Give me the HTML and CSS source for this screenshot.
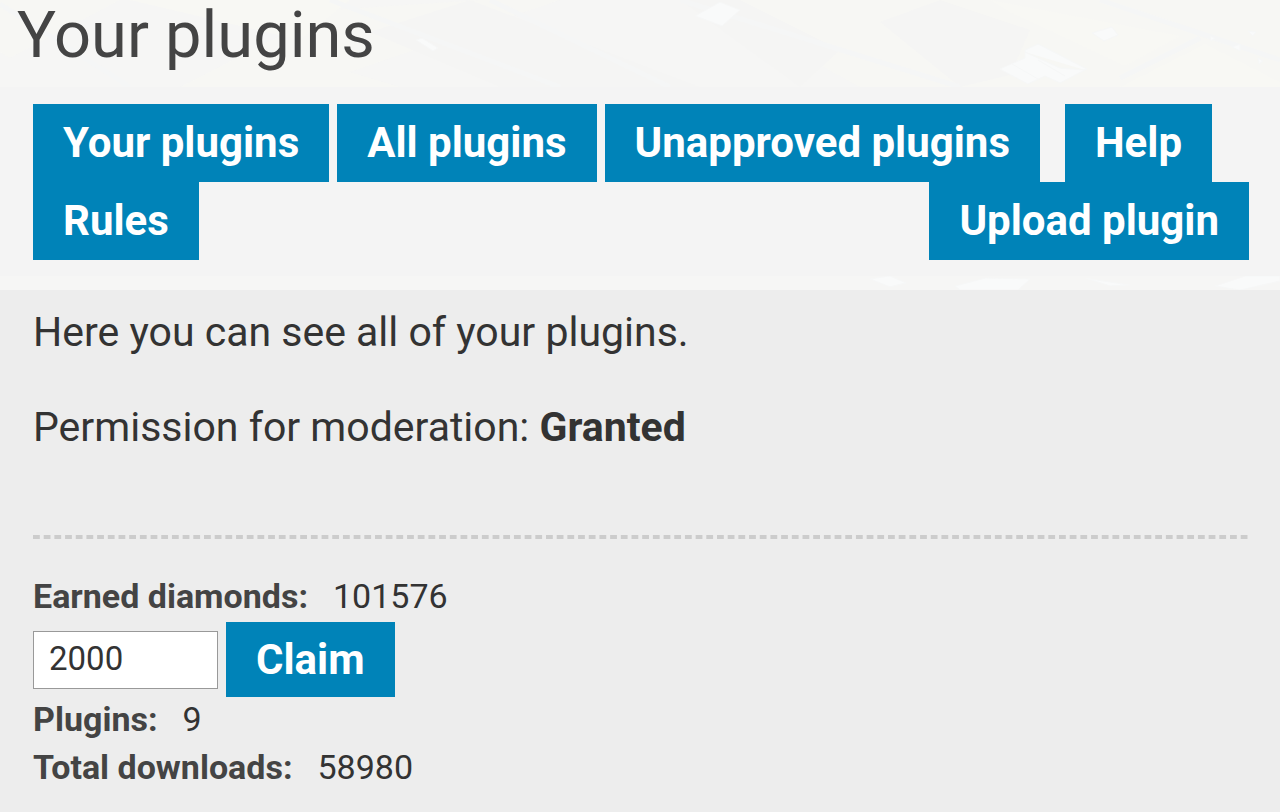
FILE: index.html
```html
<!DOCTYPE html>
<html lang="en">
<head>
<meta charset="utf-8">
<meta name="viewport" content="width=device-width, initial-scale=1">
<title>Your plugins</title>
<link rel="stylesheet" href="styles.css">
</head>
<body>
<header class="banner">
  <svg class="scenery" viewBox="0 0 1280 87" preserveAspectRatio="xMaxYMin slice" aria-hidden="true">
    <path class="lawn" d="M0 0H120L10 58 0 52ZM180 87L330 10 480 0H1280V87H860L700 0H560L350 72 400 87Z" opacity=".35"/>
    <path class="lawn" d="M990 0L1180 36 1125 66 1010 12ZM1120 87L1205 44 1280 82V87ZM130 0H350L300 40Z"/>
    <path class="field" d="M370 32L470 0 700 87H500ZM880 22L940 0 1030 30 1010 75 960 87ZM680 0H740L840 50 800 87Z"/>
    <path class="road" d="M0 4L130 87M330 0L560 87M490 0L670 87M680 0L960 87M1100 0L1280 60M1120 78L1200 38"/>
    <path class="roof" d="M1000 69L1025 58 1025 50 1038 44 1087 69 1060 83 1045 76 1028 84ZM1025 52L1060 68 1085 70M1012 64L1038 79M1038 60L1065 76"/>
    <path class="roof" d="M416 40L422 38 438 48 433 51ZM695 16L720 2 740 10 722 26ZM1092 33L1112 27 1118 35 1104 41ZM1232 47L1240 44 1240 51ZM1248 31L1256 32 1253 36ZM1258 58L1263 61 1259 64ZM1210 36L1215 38 1211 41Z"/>
  </svg>
  <h1 class="title">Your plugins</h1>
</header>
<nav class="tabs" aria-label="Plugins">
  <div class="tab-list">
    <a class="button" href="#your">Your plugins</a>
    <a class="button" href="#all">All plugins</a>
    <a class="button" href="#unapproved">Unapproved plugins</a>
    <a class="button help" href="#help">Help</a>
    <a class="button" href="#rules">Rules</a>
    <a class="button upload" href="#upload">Upload plugin</a>
  </div>
</nav>
<div class="strip">
  <svg class="scenery" viewBox="0 0 1280 14" preserveAspectRatio="xMaxYMin slice" aria-hidden="true">
    <path class="roof" d="M870 3L890 0 906 7 890 11ZM955 10L985 2 1030 3 1018 14H960ZM1085 2L1130 9 1110 10ZM1215 10L1245 0H1280V5L1240 14Z"/>
  </svg>
</div>
<main class="content">
  <p class="lead">Here you can see all of your plugins.</p>
  <p class="lead">Permission for moderation: <strong>Granted</strong></p>
  <hr class="divider">
  <section class="stats">
    <p class="stat"><strong>Earned diamonds:</strong><span>101576</span></p>
    <form class="claim">
      <input class="amount" type="text" inputmode="numeric" value="2000" aria-label="Diamonds to claim">
      <button class="button claim-button" type="button">Claim</button>
    </form>
    <p class="stat"><strong>Plugins:</strong><span>9</span></p>
    <p class="stat"><strong>Total downloads:</strong><span>58980</span></p>
  </section>
</main>
</body>
</html>
```

FILE: styles.css
```css
* {
  box-sizing: border-box;
}

body {
  margin: 0;
  background: #ededed;
  color: #333;
  font-family: Roboto, "Liberation Sans", sans-serif;
}

p,
h1 {
  margin: 0;
}

.banner,
.strip {
  position: relative;
  background: #f6f6f5;
}

.banner {
  padding: 0 17px 16px;
}

.scenery {
  position: absolute;
  inset: 0;
  width: 100%;
  height: 100%;
}

.lawn {
  fill: #f8f8f4;
}

.field {
  fill: #f5f5f4;
}

.road {
  fill: none;
  stroke: #f5f6f6;
  stroke-width: 5;
}

.roof {
  fill: #f9fafa;
  stroke: #f6f7f7;
  stroke-width: 1;
}

.title {
  position: relative;
  color: #444;
  font-size: 65px;
  font-weight: 400;
  line-height: 71px;
}

.tabs {
  padding: 17px 31px 16px 33px;
  background: #f4f4f4;
}

.tab-list {
  display: flex;
  flex-wrap: wrap;
  column-gap: 8px;
}

.button {
  padding: 0 30px;
  border: 0;
  background: #0083b8;
  color: #fff;
  font-family: inherit;
  font-size: 42px;
  font-weight: 700;
  line-height: 78px;
  text-decoration: none;
  white-space: nowrap;
}

.help {
  margin-left: 17px;
}

.upload {
  margin-left: auto;
}

.strip {
  height: 14px;
}

.content {
  padding: 18px 31px 20px 33px;
}

.lead {
  margin-bottom: 47px;
  font-size: 41px;
  line-height: 48px;
}

.divider {
  height: 4px;
  margin: 84px 0 33px;
  border: 0;
  background: linear-gradient(90deg, #ccc 66%, transparent 66%) 0 0 / calc((100% + 4px) / 114) 4px repeat-x;
}

.stat {
  display: flex;
  gap: 25px;
  font-size: 34px;
  line-height: 48px;
}

.stat strong {
  color: #444;
}

.claim {
  display: flex;
  align-items: center;
  gap: 8px;
  margin: 2px 0 -2px;
}

.amount {
  width: 185px;
  height: 58px;
  padding: 0 15px 2px;
  border: 1px solid #999;
  border-radius: 0;
  background: #fff;
  color: #333;
  font-family: inherit;
  font-size: 33px;
}

.claim-button {
  line-height: 75px;
}
```
